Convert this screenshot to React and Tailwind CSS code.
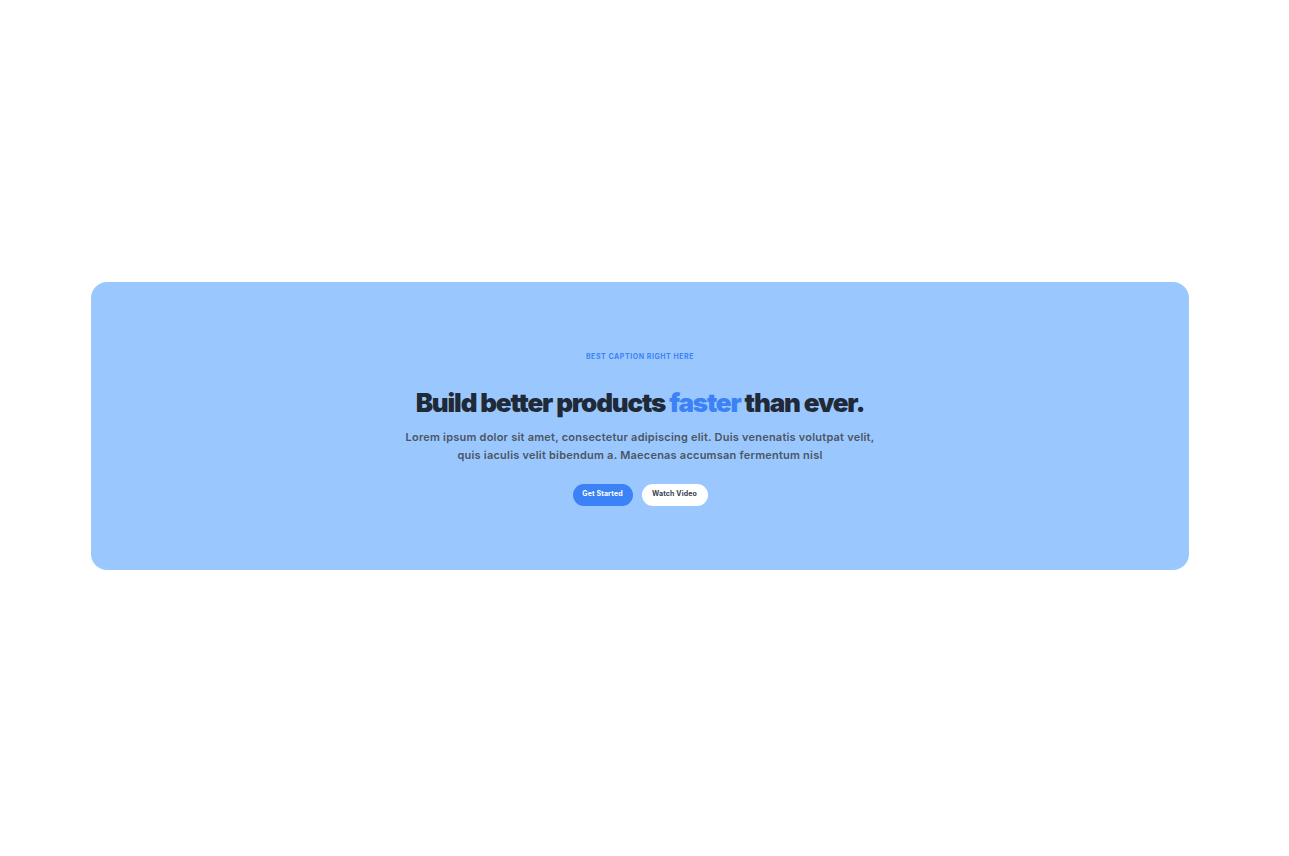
import React from "react";

const App = () => {
  return (
    <div className="min-h-screen bg-white pt-[282px] font-['Inter',sans-serif]">
      <div className="ml-[91px] flex h-[288px] w-[1098px] flex-col items-center rounded-2xl bg-[#9ac8fe] pt-[70px] text-center">
        <p className="text-[7px] font-bold uppercase tracking-[0.08em] text-[#3b82f6]">Best caption right here</p>
        <h1 className="mt-[23px] text-[26px] font-black leading-[34px] tracking-[-0.045em] text-[#1f2937]">
          Build better products <span className="text-[#3b82f6]">faster</span> than ever.
        </h1>
        <p className="mt-[8px] w-[480px] text-[11px] font-semibold leading-[18px] tracking-[0.02em] text-[#4b5563]">
          Lorem ipsum dolor sit amet, consectetur adipiscing elit. Duis venenatis volutpat velit, quis iaculis velit bibendum a. Maecenas accumsan fermentum nisl
        </p>
        <div className="mt-[20px] flex gap-[9px]">
          <button className="h-[22px] w-[60px] rounded-full bg-[#3b82f6] text-[7px] font-bold tracking-[0.02em] text-white">Get Started</button>
          <button className="h-[22px] w-[66px] rounded-full bg-white text-[7px] font-bold tracking-[0.02em] text-[#374151]">Watch Video</button>
        </div>
      </div>
    </div>
  );
};

export default App;
